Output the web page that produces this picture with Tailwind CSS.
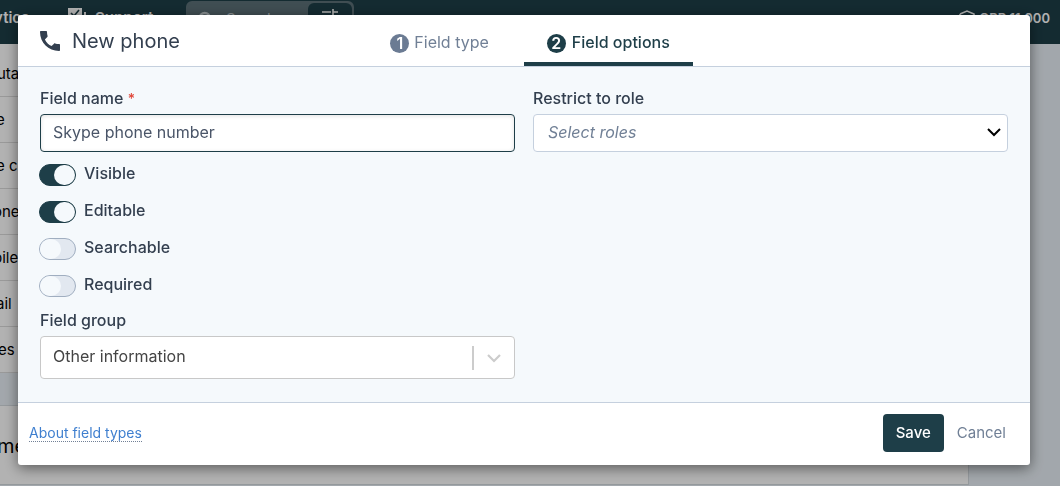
<!doctype html>
<html lang="en">
	<head>
		<meta charset="UTF-8">
		<meta content="width=device-width, initial-scale=1" name="viewport">
		<title>New phone field</title>
		<script src="https://cdn.jsdelivr.net/npm/@tailwindcss/browser@4"></script>
	</head>
	<body class="h-screen overflow-hidden bg-[#e9f0f6] font-[Inter,sans-serif] text-base text-[#333f4f]">
		<!-- Page behind the dialog -->
		<header class="flex h-11 items-start bg-[#1d3e47] text-[15px] font-semibold text-white">
			<div class="flex w-[67px] shrink-0 pt-2"><a class="-ml-[10px] leading-5" href="#">lytics</a></div>
			<a class="flex w-[119px] items-start gap-2 pt-2 leading-5" href="#">
				<svg class="h-5 w-5" viewBox="0 0 20 20" fill="none">
					<path d="M1 0h14v13H1z" fill="#fff"/>
					<path d="M4 5l3 3 5-6" stroke="#1d3e47" stroke-width="1.6"/>
					<path d="M17 4v9h2V4z" fill="#fff"/>
				</svg>
				Support
			</a>
			<div class="mt-px flex h-9 w-[168px] rounded-md border-2 border-[#5c7077] bg-[#5c7077]">
				<div class="flex flex-1 items-start gap-[10px] pt-[5px] pl-2 leading-[22px] font-normal text-[#c3cdd0]">
					<svg class="h-5 w-5" viewBox="0 0 16 16" fill="none" stroke="currentColor" stroke-width="2">
						<circle cx="7" cy="8" r="4"/>
						<path d="M10 11l4 4"/>
					</svg>
					Search
				</div>
				<button class="flex w-11 justify-center rounded-md bg-[#1d3e47] pt-1" type="button" aria-label="Filters">
					<svg class="h-4 w-4" viewBox="0 0 16 16" fill="none" stroke="#fff" stroke-width="1.6">
						<path d="M0 5h9M11 5h5M11 2v6M0 11h4M7 11h9M5 8v6"/>
					</svg>
				</button>
			</div>
			<div class="ml-auto flex items-center gap-1 pt-2 pr-[10px] text-[13px] leading-5">
				<svg class="h-4 w-4" viewBox="0 0 16 16" fill="none" stroke="#fff" stroke-width="1.6">
					<path d="M1 4l7-3 7 3v3M1 4v3l5 2M3 8v4l5 3 5-3V8"/>
				</svg>
				ORP 11,000
			</div>
		</header>
		<main class="mr-[91px]">
			<ul class="bg-white pt-[7px] text-[15px] leading-[45px] text-black">
				<li class="border-b border-[#dcdcdc]"><span class="-ml-[3px]">uta</span></li>
				<li class="border-b border-[#dcdcdc]"><span class="-ml-1">e</span></li>
				<li class="border-b border-[#dcdcdc]"><span class="-ml-1">e c</span></li>
				<li class="border-b border-[#dcdcdc]"><span class="-ml-[7px]">one</span></li>
				<li class="border-b border-[#dcdcdc]"><span class="-ml-[7px]">bile</span></li>
				<li class="border-b border-[#dcdcdc]"><span class="-ml-1">ail</span></li>
				<li class="border-b border-[#dcdcdc]"><span class="-ml-[2px]">es</span></li>
			</ul>
			<section class="mt-8 h-20 border-y border-r border-[#d5dbe0] bg-white pt-[26px] text-xl text-black">
				<h2 class="-ml-[3px]">me</h2>
			</section>
		</main>

		<!-- Dialog -->
		<div class="fixed inset-0 bg-black/30 pt-[15px] pr-[30px] pl-[18px]">
			<form class="overflow-clip rounded-[3px] bg-white shadow-[0_3px_14px_rgba(0,0,0,0.5)]">
				<div class="flex h-[52px] border-b border-[#c5d0de]">
					<div class="flex w-1/3 items-center gap-3 pl-[22px]">
						<svg class="h-5 w-5" viewBox="0 0 20 20" fill="#333f4f">
							<path d="M1 0h5c.6 0 1 .4 1 1 0 1.400.2 2.700.6 3.900.1.400 0 .8-.3 1.100L4.900 8.400c1.600 3.100 3.600 5.100 6.700 6.700l2.400-2.400c.3-.3.7-.4 1.100-.3 1.200.4 2.500.6 3.900.6.6 0 1 .4 1 1V19c0 .6-.4 1-1 1C8.500 20 0 11.500 0 1c0-.6.4-1 1-1z"/>
						</svg>
						<h1 class="text-xl">New phone</h1>
					</div>
					<nav class="flex gap-3 pl-3">
						<a class="flex items-center gap-[5px] border-b-4 border-transparent px-[23px] pt-[9px] text-[#718096]" href="#">
							<span class="flex h-[19px] w-[19px] items-center justify-center rounded-full bg-[#6b7b93] font-semibold text-white">1</span>
							<span class="pb-[2px]">Field type</span>
						</a>
						<a class="flex items-center gap-[6px] border-b-4 border-[#1e3e48] px-[23px] pt-[9px] font-medium text-[#1e3e48]" href="#" aria-current="step">
							<span class="flex h-[19px] w-[19px] items-center justify-center rounded-full bg-[#1e3e48] font-semibold text-white">2</span>
							<span class="pb-[2px]">Field options</span>
						</a>
					</nav>
				</div>

				<div class="grid grid-cols-2 gap-x-[18px] border-b border-[#c5d0de] bg-[#f5f9fc] px-[22px] pt-[21px] pb-[23px]">
					<div>
						<label class="block h-[26px] leading-5 font-medium" for="name">Field name <span class="text-sm text-[#e0473a]">*</span></label>
						<input class="block h-[38px] w-full rounded border border-[#1e3e48] bg-white px-3 pb-[2px] text-[#4a5568] shadow-[inset_0_1px_4px_rgba(0,0,0,0.12)] outline-none" id="name" type="text" value="Skype phone number">

						<div class="mt-3 -ml-px flex flex-col gap-[15px] font-medium">
							<label class="flex h-[22px] items-center gap-2">
								<input class="h-[22px] w-[37px] appearance-none rounded-full border border-[#a0aec0] bg-[#e2e8f0] before:block before:h-5 before:w-[21px] before:rounded-full before:bg-[#f5f9fc] checked:border-[#1e3e48] checked:bg-[#1e3e48] checked:before:ml-[14px]" type="checkbox" checked>
								<span class="pb-1">Visible</span>
							</label>
							<label class="flex h-[22px] items-center gap-2">
								<input class="h-[22px] w-[37px] appearance-none rounded-full border border-[#a0aec0] bg-[#e2e8f0] before:block before:h-5 before:w-[21px] before:rounded-full before:bg-[#f5f9fc] checked:border-[#1e3e48] checked:bg-[#1e3e48] checked:before:ml-[14px]" type="checkbox" checked>
								<span class="pb-1">Editable</span>
							</label>
							<label class="flex h-[22px] items-center gap-2">
								<input class="h-[22px] w-[37px] appearance-none rounded-full border border-[#a0aec0] bg-[#e2e8f0] before:block before:h-5 before:w-[21px] before:rounded-full before:bg-[#f5f9fc] checked:border-[#1e3e48] checked:bg-[#1e3e48] checked:before:ml-[14px]" type="checkbox">
								<span class="pb-1">Searchable</span>
							</label>
							<label class="flex h-[22px] items-center gap-2">
								<input class="h-[22px] w-[37px] appearance-none rounded-full border border-[#a0aec0] bg-[#e2e8f0] before:block before:h-5 before:w-[21px] before:rounded-full before:bg-[#f5f9fc] checked:border-[#1e3e48] checked:bg-[#1e3e48] checked:before:ml-[14px]" type="checkbox">
								<span class="pb-1">Required</span>
							</label>
						</div>

						<label class="mt-[13px] block h-[26px] leading-5 font-medium" for="group">Field group</label>
						<div class="relative">
							<select class="block h-[43px] w-full appearance-none rounded border border-[#c8c8c8] bg-white px-3 pb-1 text-[#444]" id="group">
								<option>Other information</option>
							</select>
							<div class="pointer-events-none absolute inset-y-0 right-0 flex w-[43px] items-center">
								<span class="h-6 w-[2px] bg-[#ccc]"></span>
								<svg class="ml-3 h-4 w-4" viewBox="0 0 16 16" fill="none" stroke="#ccc" stroke-width="2.200">
									<path d="M2 5l6 6 6-6"/>
								</svg>
							</div>
						</div>
					</div>
					<div>
						<label class="block h-[26px] leading-5 font-medium" for="role">Restrict to role</label>
						<div class="relative">
							<select class="block h-[38px] w-full appearance-none rounded border border-[#c5d0de] bg-white px-[14px] pb-[2px] text-[#718096] italic" id="role">
								<option>Select roles</option>
							</select>
							<svg class="pointer-events-none absolute top-[10px] right-[6px] h-4 w-4" viewBox="0 0 16 16" fill="none" stroke="#000" stroke-width="2">
								<path d="M2 5l6 6 6-6"/>
							</svg>
						</div>
					</div>
				</div>

				<div class="flex h-[62px] items-center pr-6 pb-[2px] pl-[11px]">
					<a class="border-b border-dotted border-[#718096] text-sm leading-4 text-[#3f7fcf]" href="#">About field types</a>
					<button class="ml-auto h-[38px] rounded bg-[#1e3e48] px-[13px] text-[15px] font-medium text-white" type="submit">Save</button>
					<button class="ml-[13px] h-[38px] text-[15px] text-[#718096]" type="button">Cancel</button>
				</div>
			</form>
		</div>
	</body>
</html>
